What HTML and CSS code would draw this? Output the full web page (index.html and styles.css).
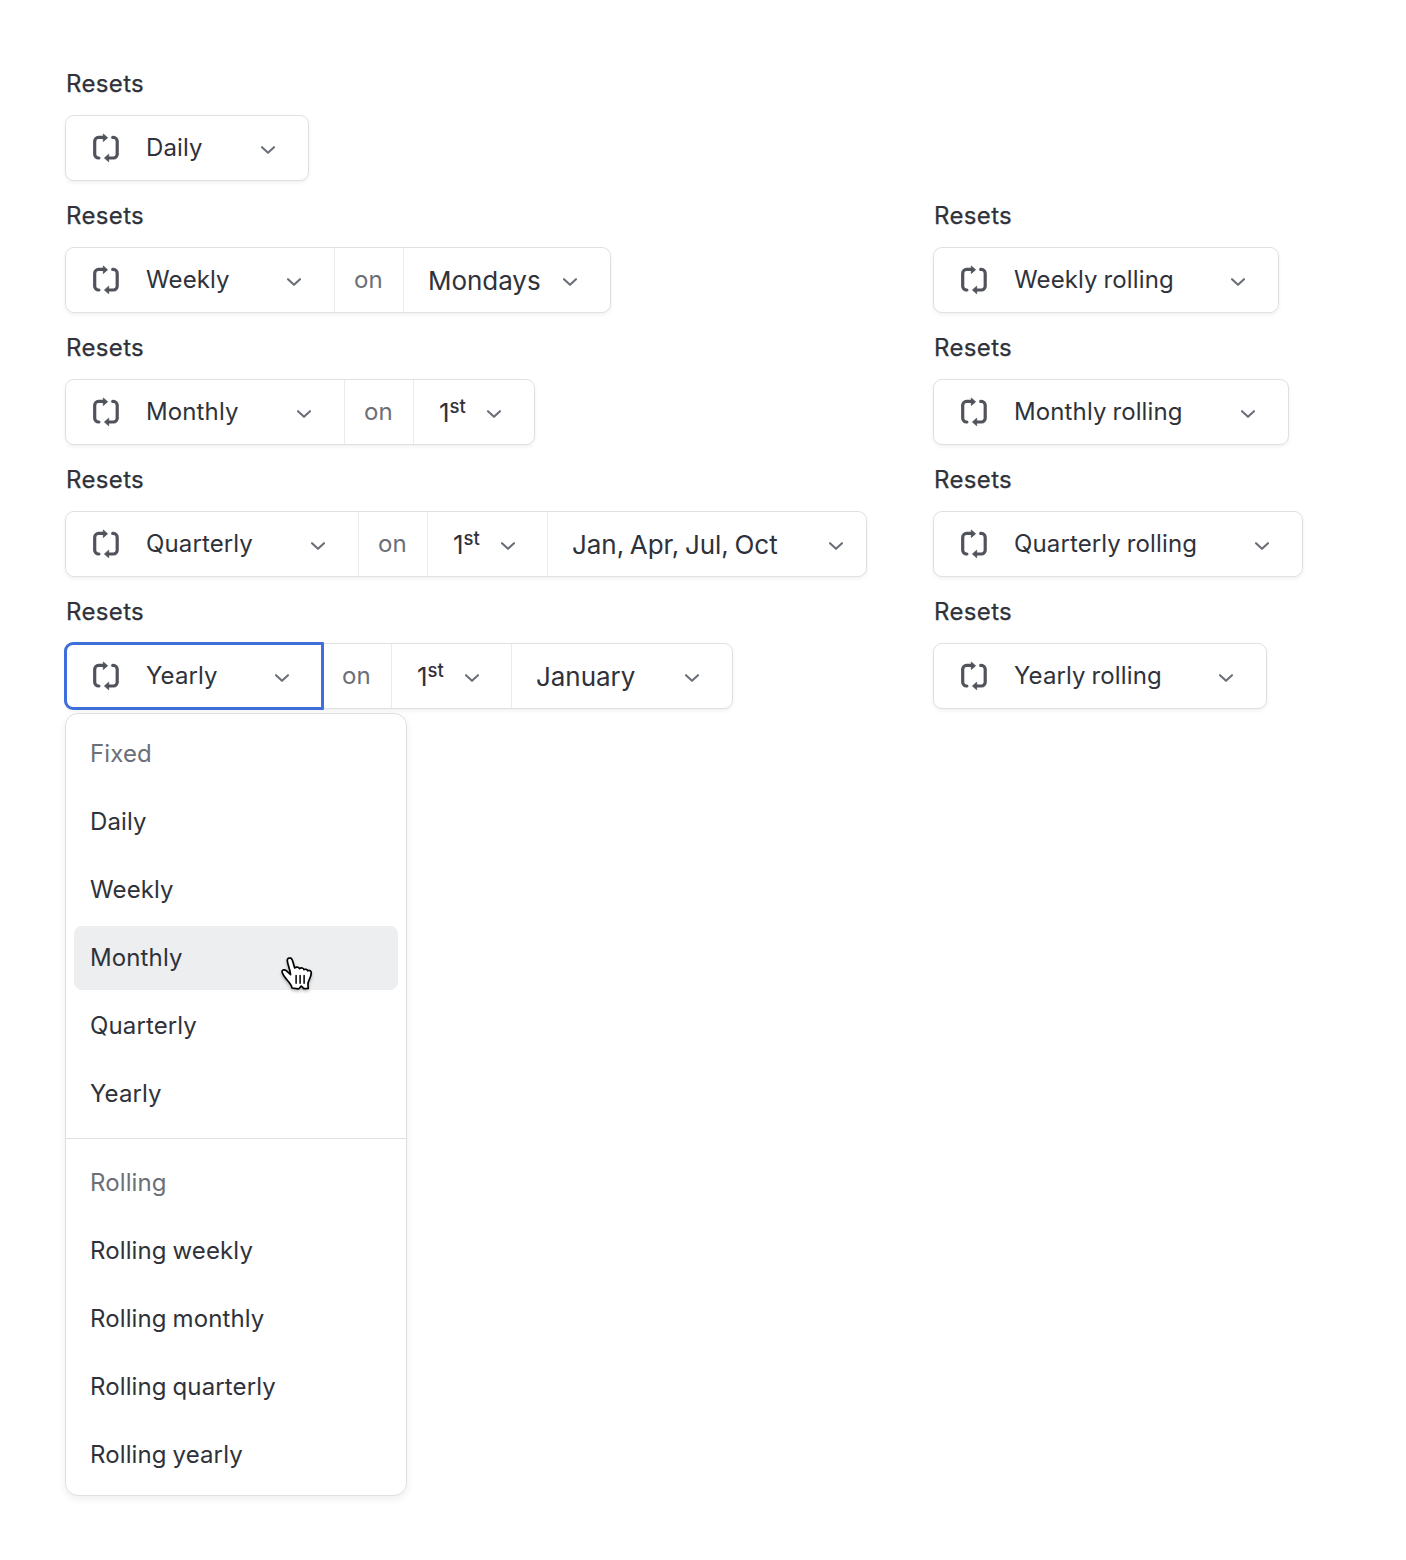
FILE: index.html
```html
<!DOCTYPE html>
<html lang="en">
<head>
<meta charset="utf-8">
<title>Resets</title>
<link rel="stylesheet" href="styles.css">
</head>
<body>
<svg class="sprite" aria-hidden="true">
  <symbol id="cycle" viewBox="0 0 32 32">
    <path d="M8.900 26H8.500a3.800 3.800 0 0 1-3.800-3.800V9.200a3.800 3.800 0 0 1 3.800-3.800H14M22.700 5.400h.7a3.800 3.800 0 0 1 3.800 3.800v13a3.800 3.800 0 0 1-3.800 3.800H18" fill="none" stroke="currentColor" stroke-width="3.200" stroke-linecap="round"/>
    <path d="M13.300 2v7.500l4.300-3.700zM18.700 22.200v7.500l-4.300-3.700z" fill="currentColor" stroke="currentColor" stroke-width=".8" stroke-linejoin="round"/>
  </symbol>
  <symbol id="chevron" viewBox="0 0 16 16">
    <path d="M2 5.200 8 10.800l6-5.600" fill="none" stroke="currentColor" stroke-width="2.100" stroke-linecap="round" stroke-linejoin="round"/>
  </symbol>
</svg>
<main class="board">
  <section class="column">
    <div class="field">
      <span class="label">Resets</span>
      <div class="control">
        <button class="segment period daily"><svg class="cycle"><use href="#cycle"/></svg><span>Daily</span><svg class="chevron"><use href="#chevron"/></svg></button>
      </div>
    </div>
    <div class="field">
      <span class="label">Resets</span>
      <div class="control">
        <button class="segment period weekly"><svg class="cycle"><use href="#cycle"/></svg><span>Weekly</span><svg class="chevron"><use href="#chevron"/></svg></button>
        <span class="segment on">on</span>
        <button class="segment value weekday"><span>Mondays</span><svg class="chevron"><use href="#chevron"/></svg></button>
      </div>
    </div>
    <div class="field">
      <span class="label">Resets</span>
      <div class="control">
        <button class="segment period monthly"><svg class="cycle"><use href="#cycle"/></svg><span>Monthly</span><svg class="chevron"><use href="#chevron"/></svg></button>
        <span class="segment on">on</span>
        <button class="segment value day"><span>1<sup>st</sup></span><svg class="chevron"><use href="#chevron"/></svg></button>
      </div>
    </div>
    <div class="field">
      <span class="label">Resets</span>
      <div class="control">
        <button class="segment period quarterly"><svg class="cycle"><use href="#cycle"/></svg><span>Quarterly</span><svg class="chevron"><use href="#chevron"/></svg></button>
        <span class="segment on">on</span>
        <button class="segment value day"><span>1<sup>st</sup></span><svg class="chevron"><use href="#chevron"/></svg></button>
        <button class="segment value months"><span>Jan, Apr, Jul, Oct</span><svg class="chevron"><use href="#chevron"/></svg></button>
      </div>
    </div>
    <div class="field">
      <span class="label">Resets</span>
      <div class="control">
        <button class="segment period yearly focused"><svg class="cycle"><use href="#cycle"/></svg><span>Yearly</span><svg class="chevron"><use href="#chevron"/></svg></button>
        <span class="segment on">on</span>
        <button class="segment value day"><span>1<sup>st</sup></span><svg class="chevron"><use href="#chevron"/></svg></button>
        <button class="segment value month"><span>January</span><svg class="chevron"><use href="#chevron"/></svg></button>
      </div>
      <div class="menu">
        <div class="item heading">Fixed</div>
        <div class="item">Daily</div>
        <div class="item">Weekly</div>
        <div class="item hovered">Monthly
          <svg class="pointer" viewBox="0 0 34 36">
            <path d="M12 32C11.500 28 7.500 25 5 21.300 3.500 19 2 17.500 2 15.800c0-2 2.500-2.600 4.300-1.200l4.300 4C10 13 7.600 8.500 7.300 4.800 7.100 1.500 11.300.8 12.400 4.200L14.700 12c1.500-1.500 4-1.200 4.800.6 1.700-1.200 3.900-.7 4.500 1 1.500-.8 3.200-.2 3.700 1.200 1.900-1 3.600.1 3.600 2-.1 5.200-3.600 8.200-3.300 11.200l.2 4.500-4.300.2c-1-.2-1.700-2.600-2.500-2.600s-1.700 2.500-3 2.700z" fill="#fff" stroke="#000" stroke-width="1.700" stroke-linejoin="round"/>
            <path d="M16.100 19.500v7.800M20.100 19.500v7.800M24.100 19.500v7.800" stroke="#000" stroke-width="1.500" stroke-linecap="round"/>
          </svg>
        </div>
        <div class="item">Quarterly</div>
        <div class="item">Yearly</div>
        <div class="separator"></div>
        <div class="item heading">Rolling</div>
        <div class="item">Rolling weekly</div>
        <div class="item">Rolling monthly</div>
        <div class="item">Rolling quarterly</div>
        <div class="item">Rolling yearly</div>
      </div>
    </div>
  </section>
  <section class="column rolling">
    <div class="field">
      <span class="label">Resets</span>
      <div class="control">
        <button class="segment period weekly"><svg class="cycle"><use href="#cycle"/></svg><span>Weekly rolling</span><svg class="chevron"><use href="#chevron"/></svg></button>
      </div>
    </div>
    <div class="field">
      <span class="label">Resets</span>
      <div class="control">
        <button class="segment period monthly"><svg class="cycle"><use href="#cycle"/></svg><span>Monthly rolling</span><svg class="chevron"><use href="#chevron"/></svg></button>
      </div>
    </div>
    <div class="field">
      <span class="label">Resets</span>
      <div class="control">
        <button class="segment period quarterly"><svg class="cycle"><use href="#cycle"/></svg><span>Quarterly rolling</span><svg class="chevron"><use href="#chevron"/></svg></button>
      </div>
    </div>
    <div class="field">
      <span class="label">Resets</span>
      <div class="control">
        <button class="segment period yearly"><svg class="cycle"><use href="#cycle"/></svg><span>Yearly rolling</span><svg class="chevron"><use href="#chevron"/></svg></button>
      </div>
    </div>
  </section>
</main>
</body>
</html>
```
FILE: styles.css
```css
* { box-sizing: border-box; }

body {
  margin: 0;
  min-height: 1560px;
  background: #fff;
  color: #2f323a;
  font-family: Inter, "Liberation Sans", sans-serif;
  font-size: 24px;
  letter-spacing: 0.12px;
  word-spacing: -1px;
}

.sprite { display: none; }

.board {
  display: grid;
  grid-template-columns: 868px 1fr;
  padding: 66px 0 0 65px;
}

.column {
  display: flex;
  flex-direction: column;
  align-items: flex-start;
  gap: 17px;
}

.rolling { padding-top: 132px; }

.field { position: relative; }

.label {
  display: block;
  height: 36px;
  margin-bottom: 13px;
  padding-left: 1px;
  line-height: 36px;
  letter-spacing: 0.35px;
  -webkit-text-stroke: 0.25px currentColor;
}

.control {
  display: inline-flex;
  height: 66px;
  border: 1px solid #dfe0e3;
  border-radius: 9px;
  background: #fff;
  box-shadow: 0 2px 4px rgba(0, 0, 0, 0.06);
  vertical-align: top;
}

.segment {
  display: flex;
  align-items: center;
  margin: 0;
  padding: 0 32px 0 24px;
  border: 0;
  border-right: 1px solid #ebebee;
  background: none;
  color: inherit;
  font: inherit;
  letter-spacing: inherit;
  word-spacing: inherit;
  white-space: nowrap;
}

.segment:last-child { border-right: 0; }

.segment > span { margin-bottom: 2px; }

.cycle {
  width: 32px;
  height: 32px;
  margin-right: 24px;
  color: #50535b;
}

.chevron {
  width: 16px;
  height: 16px;
  margin: 4px 0 0 auto;
  color: #6b6f78;
}

.daily { width: 242px; }
.weekly { width: 269px; }
.monthly { width: 279px; }
.quarterly { width: 293px; }
.yearly { width: 257px; }

.rolling .weekly { width: 344px; }
.rolling .monthly { width: 354px; }
.rolling .quarterly { width: 368px; }
.rolling .yearly { width: 332px; }

.on {
  justify-content: center;
  width: 69px;
  padding: 0 1px 2px 0;
  color: #6b6f78;
}

.value {
  padding-top: 2px;
  font-size: 26px;
  letter-spacing: -0.05px;
  word-spacing: -1.5px;
}

.value .chevron { margin-top: 2px; }

.weekday { width: 206px; }
.day { width: 120px; padding-left: 25px; }
.day:not(:last-child) { padding-right: 31px; }
.months { width: 318px; padding-right: 22px; }
.month { width: 220px; }

sup {
  font-size: 18.5px;
  font-weight: 500;
  line-height: 0;
  vertical-align: 9px;
}

.segment.focused {
  width: 260px;
  margin: -2px -1px -2px -2px;
  padding: 0 31px 0 23px;
  border: 3px solid #3f6fdb;
  border-radius: 9px 1px 1px 9px;
}

.menu {
  position: absolute;
  top: 119px;
  left: 0;
  display: flex;
  flex-direction: column;
  gap: 4px;
  width: 342px;
  padding: 8px;
  border: 1px solid #dfe0e3;
  border-radius: 13px;
  background: #fff;
  box-shadow: 0 3px 8px rgba(0, 0, 0, 0.07);
}

.item {
  position: relative;
  height: 64px;
  padding-left: 16px;
  border-radius: 8px;
  line-height: 64px;
}

.heading { color: #6b6f78; }

.hovered { background: #edeef0; }

.separator {
  height: 1px;
  margin: 8px -8px;
  background: #dfe0e3;
}

.pointer {
  position: absolute;
  top: 30px;
  left: 206px;
  width: 34px;
  height: 36px;
  filter: drop-shadow(0 2px 1.5px rgba(0, 0, 0, 0.25));
}
```
